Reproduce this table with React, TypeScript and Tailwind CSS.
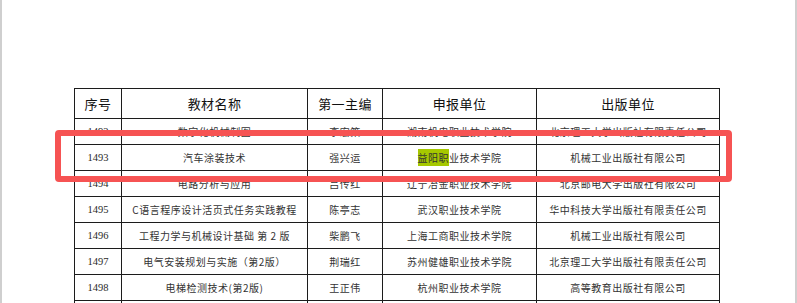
const headers = ['序号', '教材名称', '第一主编', '申报单位', '出版单位'];

const rows = [
  { no: '1492', name: '数字化机械制图', editor: '李宏策', unit: '湖南机电职业技术学院', press: '北京理工大学出版社有限责任公司' },
  { no: '1493', name: '汽车涂装技术', editor: '强兴运', unit: '益阳职业技术学院', press: '机械工业出版社有限公司', hl: true },
  { no: '1494', name: '电路分析与应用', editor: '吕传红', unit: '辽宁冶金职业技术学院', press: '北京邮电大学出版社有限公司' },
  { no: '1495', name: 'C语言程序设计活页式任务实践教程', editor: '陈亭志', unit: '武汉职业技术学院', press: '华中科技大学出版社有限责任公司' },
  { no: '1496', name: '工程力学与机械设计基础 第 2 版', editor: '柴鹏飞', unit: '上海工商职业技术学院', press: '机械工业出版社有限公司' },
  { no: '1497', name: '电气安装规划与实施（第2版）', editor: '荆瑞红', unit: '苏州健雄职业技术学院', press: '北京理工大学出版社有限责任公司' },
  { no: '1498', name: '电梯检测技术(第2版)', editor: '王正伟', unit: '杭州职业技术学院', press: '高等教育出版社有限公司' },
];

const cell = 'border-r border-b border-[#1c1c1c] flex items-center justify-center whitespace-nowrap overflow-hidden';
const cjk = "font-['Noto_Sans_CJK_SC',sans-serif]";

export default function App() {
  return (
    <div className="relative w-[797px] h-[303px] overflow-hidden bg-white flex">
      <div className="w-[2px] h-full bg-[#cfcfcf] shrink-0" />
      <div className="flex-1 pl-[72px] pt-[88px]">
        <div className="grid grid-cols-[47px_186px_75px_154px_183px] w-fit border-l border-t border-[#1c1c1c]">
          {headers.map((h) => (
            <div key={h} className={`${cell} h-[30px] text-[13px] tracking-[0.4px] text-[#111] ${cjk}`}>
              {h}
            </div>
          ))}
          {rows.map((r) => (
            <div key={r.no} className="contents">
              <div className={`${cell} h-[26px] text-[10.5px] text-[#2a2a2a] font-['Liberation_Serif',serif]`}>{r.no}</div>
              <div className={`${cell} h-[26px] text-[10px] tracking-[0.5px] text-[#333] ${cjk}`}>{r.name}</div>
              <div className={`${cell} h-[26px] text-[10px] tracking-[0.5px] text-[#333] ${cjk}`}>{r.editor}</div>
              <div className={`${cell} h-[26px] text-[10px] tracking-[0.5px] text-[#333] ${cjk}`}>
                {r.hl ? (
                  <span>
                    <span className="bg-[#a6c800] py-[1px]">{r.unit.slice(0, 3)}</span>
                    {r.unit.slice(3)}
                  </span>
                ) : (
                  r.unit
                )}
              </div>
              <div className={`${cell} h-[26px] text-[10px] tracking-[0.5px] text-[#333] ${cjk}`}>{r.press}</div>
            </div>
          ))}
          {/* next row, only its borders show at the bottom edge */}
          {headers.map((h) => (
            <div key={'next-' + h} className={`${cell} h-[26px]`} />
          ))}
        </div>
      </div>
      <div className="w-[2px] h-full bg-[#cfcfcf] shrink-0" />

      {/* red callout around row 1493 */}
      <div className="absolute left-[55px] top-[130px] w-[677px] h-[52px] border-[6px] border-[#f65353] rounded-[4px]" />
    </div>
  );
}
